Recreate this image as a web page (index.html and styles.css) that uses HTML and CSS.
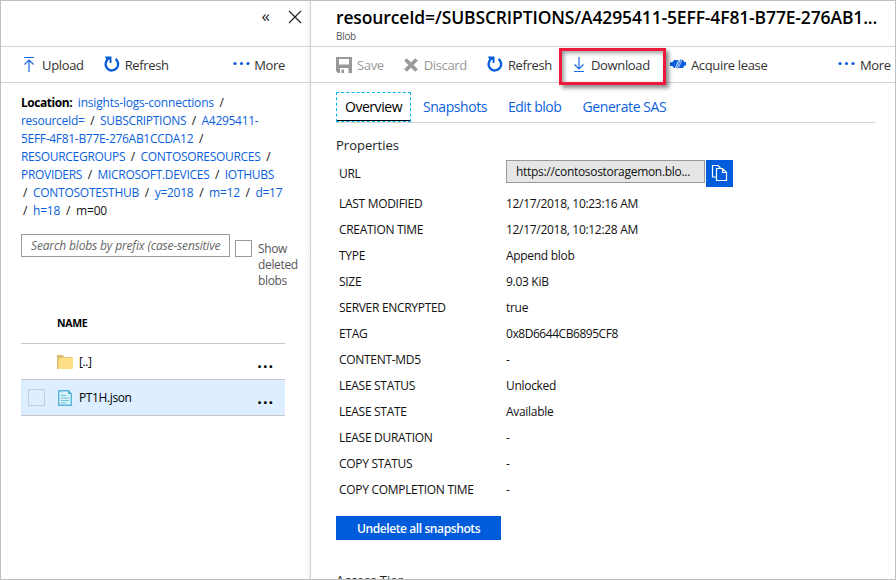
FILE: index.html
```html
<!DOCTYPE html>
<html lang="en">
<head>
<meta charset="utf-8">
<title>Blob properties</title>
<link rel="stylesheet" href="styles.css">
</head>
<body>
<div class="window">
  <section class="pane list-pane">
    <header class="pane-head list-head">
      <span class="collapse">«</span>
      <svg class="close" width="14" height="14" viewBox="0 0 14 14"><path d="M1 1l12 12M13 1L1 13" fill="none" stroke="#222" stroke-width="1.2"/></svg>
    </header>
    <nav class="toolbar list-toolbar">
      <a class="tool"><svg width="12" height="17" viewBox="0 0 12 17"><path d="M1 1.5h10M6 16V4M1.5 8.5L6 4l4.5 4.5" fill="none" stroke="#1a6ae0" stroke-width="1.2"/></svg><span>Upload</span></a>
      <a class="tool tool-refresh"><svg width="16" height="17" viewBox="0 0 16 17"><path d="M11.500 3a6.300 6.300 0 1 1-8 .6" fill="none" stroke="#0b5fdc" stroke-width="2.400"/><path d="M1 .5h6.500V7H5.600V3.800L2.500 4.200z" fill="#0b5fdc"/></svg><span>Refresh</span></a>
      <a class="tool tool-more"><svg width="17" height="5" viewBox="0 0 17 5"><g fill="#0b5fdc"><circle cx="2" cy="2.5" r="1.6"/><circle cx="8.5" cy="2.5" r="1.6"/><circle cx="15" cy="2.5" r="1.6"/></g></svg><span>More</span></a>
    </nav>
    <div class="list-body">
      <div class="location">
        <div class="l1"><b>Location:</b>&nbsp; <a>insights-logs-connections</a> &nbsp;/</div>
        <div class="l2"><a>resourceId=</a> &nbsp;/&nbsp; <a>SUBSCRIPTIONS</a> &nbsp;/&nbsp; <a>A4295411-</a></div>
        <div class="l3"><a>5EFF-4F81-B77E-276AB1CCDA12</a> &nbsp;/</div>
        <div class="l4"><a>RESOURCEGROUPS</a> &nbsp;/&nbsp; <a>CONTOSORESOURCES</a> &nbsp;/</div>
        <div class="l5"><a>PROVIDERS</a> &nbsp;/&nbsp; <a>MICROSOFT.DEVICES</a> &nbsp;/&nbsp; <a>IOTHUBS</a></div>
        <div class="l6">/&nbsp; <a>CONTOSOTESTHUB</a> &nbsp;/&nbsp; <a>y=2018</a> &nbsp;/&nbsp; <a>m=12</a> &nbsp;/&nbsp; <a>d=17</a></div>
        <div class="l7">/&nbsp; <a>h=18</a> &nbsp;/&nbsp; m=00</div>
      </div>
      <div class="filter">
        <div class="search"><span>Search blobs by prefix (case-sensitive</span></div>
        <span class="check"></span>
        <div class="deleted">Show<br>deleted<br>blobs</div>
      </div>
      <div class="files">
        <div class="file-head">NAME</div>
        <div class="file">
          <span class="slot"></span>
          <svg width="16" height="16" viewBox="0 0 16 16"><path d="M0 1h5.500l2 2H16v12H0z" fill="#d9bd6c"/><path d="M1.500 4.500L7 3.500h9V15H1.500z" fill="#ffdf86"/></svg>
          <span class="fname">[..]</span><span class="dots">...</span>
        </div>
        <div class="file selected">
          <span class="slot"><span class="check faint"></span></span>
          <svg width="16" height="16" viewBox="0 0 16 16"><path d="M1.700.7h9.600l3 3v11.600H1.700z" fill="#d8f3f8" stroke="#59b4d9" stroke-width="1.400"/><path d="M11 0l4 4h-4z" fill="#59b4d9"/><path d="M4 5.500h5M4 8h8M4 10.500h8M4 13h5" stroke="#6fc3df" stroke-width="1"/></svg>
          <span class="fname f-json">PT1H.json</span><span class="dots">...</span>
        </div>
      </div>
    </div>
  </section>
  <section class="pane detail-pane">
    <header class="pane-head detail-head">
      <h1>resourceId=/SUBSCRIPTIONS/A4295411-5EFF-4F81-B77E-276AB1...</h1>
      <p>Blob</p>
    </header>
    <nav class="toolbar detail-toolbar">
      <a class="tool off"><svg width="16" height="16" viewBox="0 0 16 16"><path d="M0 0h16v16H12.500v-5H4v5H2l-2-2zM3 2v5.500h10V2z" fill="#999" fill-rule="evenodd"/><path d="M5.500 12.500h2.500V16H5.500z" fill="#999"/></svg><span>Save</span></a>
      <a class="tool off tool-discard"><svg width="14" height="14" viewBox="0 0 14 14"><path d="M1.500 1.500l11 11M12.500 1.500l-11 11" stroke="#999" stroke-width="3.800"/></svg><span>Discard</span></a>
      <a class="tool tool-refresh2"><svg width="16" height="17" viewBox="0 0 16 17"><path d="M11.500 3a6.300 6.300 0 1 1-8 .6" fill="none" stroke="#0b5fdc" stroke-width="2.400"/><path d="M1 .5h6.500V7H5.600V3.800L2.500 4.200z" fill="#0b5fdc"/></svg><span>Refresh</span></a>
      <a class="tool tool-download"><svg width="12" height="17" viewBox="0 0 12 17"><path d="M1 15.500h10M6 1v12M1.500 8.500L6 13l4.500-4.500" fill="none" stroke="#1a6ae0" stroke-width="1.200"/></svg><span>Download</span></a>
      <a class="tool tool-lease"><svg width="17" height="12" viewBox="0 0 17 12"><path d="M0 4.200h2.300L4 2h4.300L5 10H4L2.300 8H0zM12 2h1l1.300 2H16v3.500h-1.500L13 10H8.800z" fill="#0b5fdc"/><path d="M9.300 2.500L6.300 10M11.300 1L7.800 10.500" stroke="#0b5fdc" stroke-width=".9"/></svg><span>Acquire lease</span></a>
      <a class="tool tool-more2"><svg width="17" height="5" viewBox="0 0 17 5"><g fill="#0b5fdc"><circle cx="2" cy="2.500" r="1.600"/><circle cx="8.500" cy="2.500" r="1.600"/><circle cx="15" cy="2.500" r="1.600"/></g></svg><span>More</span></a>
    </nav>
    <div class="detail-body">
      <div class="tabs">
        <a class="tab active"><span>Overview</span></a>
        <a class="tab t-snap">Snapshots</a>
        <a class="tab t-edit">Edit blob</a>
        <a class="tab t-sas">Generate SAS</a>
      </div>
      <h2>Properties</h2>
      <dl class="props">
        <div class="prop url"><dt>URL</dt><dd><span class="url-box"><span>https://contosostoragemon.blo...</span></span><span class="copy"><svg width="17" height="18" viewBox="0 0 17 18"><path d="M5 13H1.500V1.500h5.500l2.500 2.500" fill="none" stroke="#fff" stroke-width="1.200"/><path d="M5.500 4.500h6l4 4v8h-10zM11.500 4.500v4h4" fill="none" stroke="#fff" stroke-width="1.200"/></svg></span></dd></div>
        <div class="prop"><dt>LAST MODIFIED</dt><dd>12/17/2018, 10:23:16 AM</dd></div>
        <div class="prop"><dt>CREATION TIME</dt><dd>12/17/2018, 10:12:28 AM</dd></div>
        <div class="prop"><dt>TYPE</dt><dd>Append blob</dd></div>
        <div class="prop"><dt>SIZE</dt><dd>9.03 KiB</dd></div>
        <div class="prop"><dt>SERVER ENCRYPTED</dt><dd>true</dd></div>
        <div class="prop"><dt>ETAG</dt><dd class="etag">0x8D6644CB6895CF8</dd></div>
        <div class="prop"><dt>CONTENT-MD5</dt><dd>-</dd></div>
        <div class="prop"><dt>LEASE STATUS</dt><dd>Unlocked</dd></div>
        <div class="prop"><dt>LEASE STATE</dt><dd>Available</dd></div>
        <div class="prop"><dt>LEASE DURATION</dt><dd>-</dd></div>
        <div class="prop"><dt>COPY STATUS</dt><dd>-</dd></div>
        <div class="prop"><dt>COPY COMPLETION TIME</dt><dd>-</dd></div>
      </dl>
      <a class="button"><span>Undelete all snapshots</span></a>
      <h2 class="tier">Access Tier</h2>
    </div>
  </section>
</div>
</body>
</html>
```
FILE: styles.css
```css
* { box-sizing: border-box; margin: 0; padding: 0; }
body {
  width: 896px; height: 580px; overflow: hidden;
  font: 12px/18px "Open Sans", "Noto Sans", sans-serif;
  color: #111; background: #fff;
}
a { color: #0b5fdc; }
svg { flex: none; display: block; }
.window { display: flex; width: 896px; height: 580px; border: 1px solid #bfbfbf; overflow: hidden; white-space: nowrap; }
.pane { height: 578px; overflow: hidden; }
.list-pane { width: 309px; flex: none; background: linear-gradient(to left, #f3f3f3, #fff 5px); }
.detail-pane { flex: 1; border-left: 1px solid #cfcfcf; }
.pane-head { height: 46px; border-bottom: 1px solid #d2d2d2; }
.list-head { display: flex; justify-content: flex-end; padding: 9px 8px 0 0; }
.collapse { font-size: 17px; line-height: 12px; margin-right: 18px; color: #222; }
.detail-head { padding: 4px 0 0 25px; }
h1 { font-size: 17.5px; line-height: 25px; font-weight: 600; color: #000; letter-spacing: -0.14px; }
.detail-head p { font-size: 10px; line-height: 13px; color: #555; letter-spacing: -0.3px; }
.toolbar { display: flex; height: 36px; border-bottom: 1px solid #d2d2d2; }
.tool { display: flex; align-items: center; height: 35px; font-size: 13px; color: #333; letter-spacing: -0.35px; }
.tool.off { color: #999; }
.list-toolbar { padding-left: 22px; }
.list-toolbar .tool svg { margin-right: 7px; }
.list-toolbar .tool-refresh { margin-left: 20px; }
.list-toolbar .tool-refresh svg { margin-right: 5px; }
.list-toolbar .tool-more { margin-left: auto; margin-right: 25px; }
.list-toolbar .tool-more svg, .tool-more2 svg { margin-right: 4px; margin-top: -3px; }
.detail-toolbar { padding-left: 25px; position: relative; }
.detail-toolbar svg { margin-right: 5px; }
.tool-discard { margin-left: 20px; }
.detail-toolbar .tool-discard svg { margin-right: 6px; }
.tool-refresh2 { margin-left: 20px; }
.detail-toolbar .tool-download {
  position: absolute; left: 248px; top: 1px; width: 107px; height: 37px; padding: 0 0 4px 11px; z-index: 2;
  border: 3px solid #ee1a3b; box-shadow: 3px 3px 4px rgba(0,0,0,.45), inset 2px 2px 4px rgba(0,0,0,.4);
}
.detail-toolbar .tool-download svg { margin-right: 6px; }
.detail-toolbar .tool-lease { position: absolute; left: 359px; }
.detail-toolbar .tool-lease svg { margin: -2px 4px 0 0; }
.detail-toolbar .tool-more2 { position: absolute; left: 527px; }
.list-body { padding: 11px 0 0 20px; }
.location div { letter-spacing: -0.3px; height: 18px; }
.location b { color: #000; letter-spacing: -0.45px; }
.location .l6, .location .l7 { padding-left: 2px; }
.location .l6 { letter-spacing: -0.25px; }
.location .l7 { letter-spacing: -0.2px; }
.location .l1 a { letter-spacing: -0.2px; }
.filter { display: flex; margin-top: 14px; height: 56px; }
.search { width: 209px; height: 23px; border: 1px solid #999; padding: 0 9px; }
.search span { display: block; font-style: italic; line-height: 21px; color: #666; letter-spacing: -0.15px; }
.check { flex: none; width: 17px; height: 17px; border: 1px solid #999; margin: 6px 0 0 5px; }
.deleted { margin: 7px 0 0 6px; line-height: 16px; color: #555; letter-spacing: -0.35px; }
.files { width: 264px; margin-top: 13px; }
.file-head { height: 41px; padding-left: 36px; line-height: 41px; font-size: 10.5px; font-weight: 700; color: #000; border-bottom: 1px solid #c8c8c8; letter-spacing: -0.3px; }
.file { height: 36px; display: flex; align-items: center; border-bottom: 1px solid #c8c8c8; color: #000; }
.selected { background: #dceeff; }
.slot { width: 36px; }
.faint { display: block; margin: 0 0 0 7px; border-color: #c8ced4; }
.fname { margin-left: 6px; font-weight: 500; letter-spacing: -0.38px; }
.dots { margin: 0 11px 0 auto; font-size: 16px; font-weight: 700; letter-spacing: 1px; }
.detail-body { padding: 10px 0 0 25px; }
.tabs { display: flex; width: 539px; height: 30px; border-bottom: 1px solid #d2d2d2; font-size: 14px; }
.tab { line-height: 28px; margin-left: 12px; letter-spacing: -0.45px; }
.tab.active { width: 75px; height: 30px; margin: -1px 0 0; border: 1px dashed #00b4f0; color: #000; text-align: center; }
.tab.active span { display: block; height: 28px; border-bottom: 1px solid #000; }
.t-edit { margin-left: 21px; }
.t-sas { margin-left: 21px; letter-spacing: -0.4px; }
h2 { font-size: 13px; font-weight: 400; line-height: 20px; margin-top: 12px; color: #222; }
.prop { display: flex; height: 26px; line-height: 26px; padding-left: 3px; }
.prop dt { width: 167px; letter-spacing: -0.3px; }
.prop dd { letter-spacing: -0.3px; }
.prop .etag { letter-spacing: -0.45px; }
.url { height: 36px; padding-top: 5px; }
.url dt { padding-top: 1px; }
.url dd { display: flex; }
.url-box { width: 199px; height: 23px; border: 1px solid #999; background: #e6e6e6; line-height: 21px; padding-left: 9px; }
.copy { width: 27px; height: 27px; margin-left: 1px; background: #005cdb; padding: 4px 0 0 5px; }
.button { display: block; width: 165px; height: 24px; margin-top: 13px; line-height: 25px; text-align: center; background: #005cdb; color: #fff; font-weight: 600; letter-spacing: -0.4px; }
.tier { margin-top: 30px; }
```
